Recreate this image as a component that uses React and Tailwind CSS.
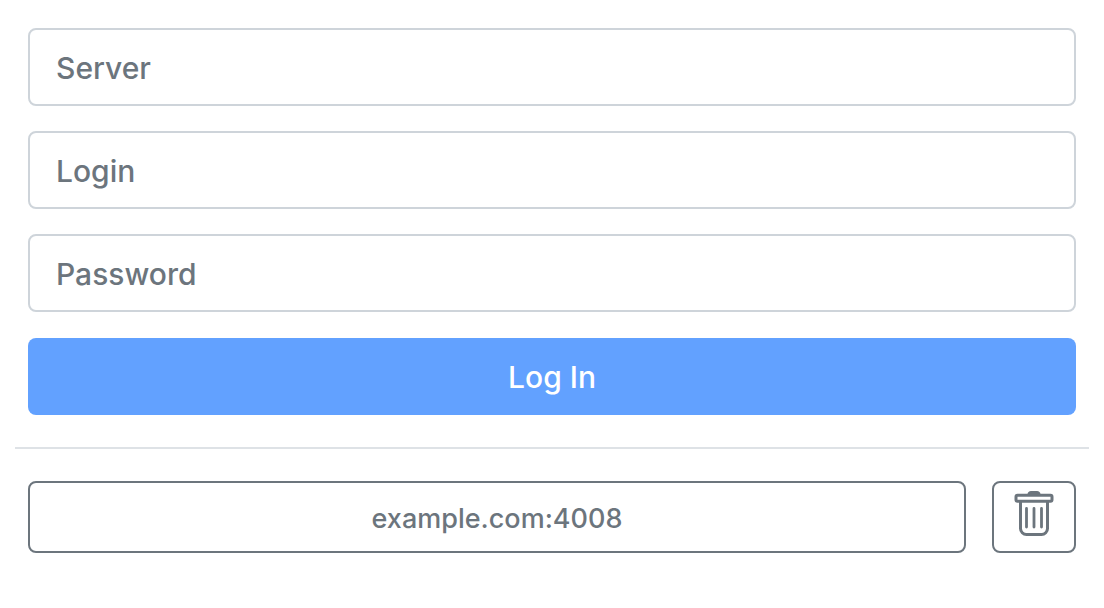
import React from "react";

const FIELDS = [
  { id: "server", label: "Server", type: "text" },
  { id: "login", label: "Login", type: "text" },
  { id: "password", label: "Password", type: "password" },
];

function Field({ id, label, type }) {
  return (
    <input
      id={id}
      name={id}
      type={type}
      aria-label={label}
      placeholder={label}
      className="h-[78px] w-full rounded-lg border-2 border-[#ced4da] bg-white px-[26px] pt-0.5 text-[30px] text-[#495057] placeholder:text-[#6c757d]"
    />
  );
}

function TrashIcon() {
  return (
    <svg width="40" height="46" viewBox="0 0 40 46" fill="none" stroke="currentColor" strokeWidth="3" aria-hidden="true">
      <path d="M13.5 4.5C13.5 2.2 15 1 17 1H23C25 1 26.500 2.200 26.500 4.500Z" fill="currentColor" stroke="none" />
      <rect x="2" y="5.200" width="36" height="6" rx="1.500" />
      <path d="M6.500 11.500V38.500A6 6 0 0 0 12.500 44.500H27.500A6 6 0 0 0 33.500 38.500V11.500" />
      <path d="M12.500 18.500V37M20 18.500V37M27.500 18.500V37" strokeWidth="2.800" strokeLinecap="round" />
    </svg>
  );
}

export default function App() {
  return (
    <main className="bg-white px-[15px] py-7 font-['Inter',sans-serif] font-[450]">
      <form className="px-[13px]" onSubmit={(e) => e.preventDefault()}>
        <div className="flex flex-col gap-[25px]">
          {FIELDS.map((field) => (
            <Field key={field.id} {...field} />
          ))}
        </div>
        <button type="submit" className="mt-[26px] block h-[77px] w-full rounded-lg bg-[#62a1ff] pt-0.5 text-[30px] text-white">
          Log In
        </button>
      </form>
      <hr className="my-8 border-t-2 border-[#dee2e6]" />
      <div className="flex gap-[26px] px-[13px]">
        <button
          type="button"
          className="h-[72px] flex-1 rounded-lg border-2 border-[#6c757d] pt-1 text-[27px] text-[#6c757d]"
        >
          example.com:4008
        </button>
        <button
          type="button"
          aria-label="Delete example.com:4008"
          className="flex h-[72px] w-[84px] items-start justify-center rounded-lg border-2 border-[#6c757d] pt-[7px] text-[#6c757d]"
        >
          <TrashIcon />
        </button>
      </div>
    </main>
  );
}
